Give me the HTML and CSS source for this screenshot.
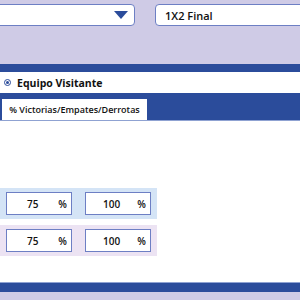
FILE: index.html
```html
<!DOCTYPE html>
<html lang="es">
<head>
    <meta charset="UTF-8">
    <title>Equipo Visitante</title>
    <link rel="stylesheet" href="styles.css">
</head>
<body>
    <div class="filters">
        <div class="select-box">
            <svg class="arrow" width="14" height="8" viewBox="0 0 14 8"><polygon points="0,0 14,0 7,8" fill="#2b4c9b"/></svg>
        </div>
        <div class="text-box">1X2 Final</div>
    </div>

    <div class="panel">
        <div class="panel-head">
            <span class="radio"></span>
            <span class="title">Equipo Visitante</span>
        </div>
        <div class="tabs">
            <div class="tab active">% Victorias/Empates/Derrotas</div>
        </div>
        <div class="panel-body">
            <div class="row row-blue">
                <div class="pct"><span class="val">75</span><span class="unit">%</span></div>
                <div class="pct"><span class="val">100</span><span class="unit">%</span></div>
            </div>
            <div class="row row-lilac">
                <div class="pct"><span class="val">75</span><span class="unit">%</span></div>
                <div class="pct"><span class="val">100</span><span class="unit">%</span></div>
            </div>
        </div>
        <div class="panel-foot"></div>
    </div>
</body>
</html>
```

FILE: styles.css
```css
body {
    margin: 0;
    background: #cfcbe6;
    font-family: "Open Sans", Arial, sans-serif;
    color: #111;
    overflow: hidden;
}
.filters {
    display: flex;
    gap: 20px;
    padding-top: 4px;
    height: 60px;
    overflow: hidden;
}
.select-box {
    flex-shrink: 0;
    width: 143px;
    height: 20px;
    margin-left: -16px;
    background: white;
    border: 1px solid #6d7fc4;
    border-radius: 4px;
    display: flex;
    align-items: center;
    justify-content: flex-end;
    padding-right: 6px;
}
.text-box {
    flex-shrink: 0;
    width: 170px;
    height: 20px;
    background: white;
    border: 1px solid #6d7fc4;
    border-radius: 4px;
    display: flex;
    align-items: center;
    padding-left: 9px;
    font-size: 11px;
    font-weight: 600;
}
.panel {
    border-top: 8px solid #2b4c9b;
    background: white;
}
.panel-head {
    height: 21px;
    display: flex;
    align-items: center;
    gap: 6px;
    padding-left: 4px;
}
.radio {
    width: 5px;
    height: 5px;
    border: 1.5px solid #2b4c9b;
    border-radius: 50%;
    position: relative;
}
.radio::after {
    content: "";
    position: absolute;
    left: 1px;
    top: 1px;
    width: 3px;
    height: 3px;
    border-radius: 50%;
    background: #2b4c9b;
}
.title {
    font-size: 10.5px;
    font-weight: 700;
}
.tabs {
    background: #2b4c9b;
    height: 28px;
    display: flex;
    align-items: flex-end;
    padding-left: 2px;
    border-bottom: 1px solid #8fa2d2;
    box-sizing: border-box;
}
.tab {
    background: white;
    height: 21px;
    width: 145px;
    box-sizing: border-box;
    display: flex;
    align-items: center;
    justify-content: center;
    font-size: 9px;
    font-weight: 600;
}
.panel-body {
    height: 161px;
    padding-top: 67px;
    box-sizing: border-box;
    display: flex;
    flex-direction: column;
    gap: 6px;
}
.row {
    width: 157px;
    height: 31px;
    display: flex;
    align-items: center;
    gap: 13px;
    padding-left: 6px;
    box-sizing: border-box;
}
.row-blue {
    background: #d4e4f6;
}
.row-lilac {
    background: #ece3f3;
}
.pct {
    width: 60px;
    height: 21px;
    background: white;
    border: 1px solid #6d7fc4;
    display: flex;
    align-items: center;
    padding-right: 4px;
    font-size: 10px;
    font-weight: 600;
}
.val {
    width: 54px;
    text-align: center;
}
.unit {
    margin-left: auto;
}
.panel-foot {
    height: 10px;
    background: #2b4c9b;
    border-top: 1px solid #8fa2d2;
    box-sizing: border-box;
}
```
